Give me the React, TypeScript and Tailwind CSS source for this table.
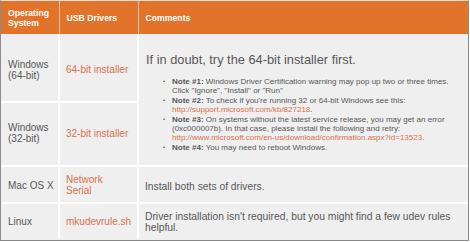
import React from "react";

const link = "text-[#dd6f4a]";

const notes = [
  {
    label: "Note #1:",
    body: <>Windows Driver Certification warning may pop up two or three times. Click "Ignore", "Install" or "Run"</>,
  },
  {
    label: "Note #2:",
    body: (
      <>
        To check if you're running 32 or 64-bit Windows see this:{" "}
        <span className={link}>http://support.microsoft.com/kb/827218</span>.
      </>
    ),
  },
  {
    label: "Note #3:",
    body: (
      <>
        On systems without the latest service release, you may get an error (0xc000007b). In that case, please install the following and retry:{" "}
        <span className={link}>http://www.microsoft.com/en-us/download/confirmation.aspx?id=13523</span>.
      </>
    ),
  },
  { label: "Note #4:", body: <>You may need to reboot Windows.</> },
];

export default function App() {
  return (
    <div className="w-[470px] h-[242px] bg-white" style={{ fontFamily: '"Liberation Sans", Arial, sans-serif' }}>
      <div className="w-[469px] h-[241px] border border-[#8c8c8c] border-t-[#dcdcdc] bg-[#efefef] overflow-hidden">
        <table className="w-full table-fixed border-collapse text-[#585858]">
          <colgroup>
            <col className="w-[58px]" />
            <col className="w-[79px]" />
            <col />
          </colgroup>
          <thead>
            <tr className="h-[33px] bg-[#e2732a] text-white text-[8.7px] leading-[10px] text-left">
              <th className="pl-[7px] pt-[1px] border-r border-[#f2c6a6] font-bold">Operating<br />System</th>
              <th className="pl-[7px] pt-[1px] border-r border-[#f2c6a6] font-bold">USB Drivers</th>
              <th className="pl-[7px] pt-[1px] font-bold">Comments</th>
            </tr>
          </thead>
          <tbody className="text-[10px] leading-[11px]">
            <tr className="h-[68px]">
              <td className="pl-[7px] pt-[4px] border-r-2 border-b-2 border-white align-middle">Windows<br />(64-bit)</td>
              <td className={`pl-[6px] pt-[4px] border-r-2 border-b-2 border-white align-middle ${link}`}>64-bit installer</td>
              <td rowSpan={2} className="pl-[7px] pr-[8px] pt-[18px] border-b-2 border-white align-top">
                <div className="text-[12.8px] leading-[15px]">If in doubt, try the 64-bit installer first.</div>
                <ul className="mt-[10px] ml-[17px] text-[8px] leading-[9.4px]">
                  {notes.map((n) => (
                    <li key={n.label} className="flex">
                      <span className="w-[9px] shrink-0 text-[6px]">•</span>
                      <span>
                        <b className="font-bold">{n.label}</b> {n.body}
                      </span>
                    </li>
                  ))}
                </ul>
              </td>
            </tr>
            <tr className="h-[64px]">
              <td className="pl-[7px] pb-[2px] border-r-2 border-b-2 border-white align-middle">Windows<br />(32-bit)</td>
              <td className={`pl-[6px] pb-[2px] border-r-2 border-b-2 border-white align-middle ${link}`}>32-bit installer</td>
            </tr>
            <tr className="h-[37px]">
              <td className="pl-[7px] pt-[2px] border-r-2 border-b-2 border-white align-middle">Mac OS X</td>
              <td className={`pl-[6px] border-r-2 border-b-2 border-white align-middle ${link}`}>Network<br />Serial</td>
              <td className="pl-[6px] pt-[3px] border-b-2 border-white align-middle text-[10.3px]">Install both sets of drivers.</td>
            </tr>
            <tr className="h-[36px]">
              <td className="pl-[7px] border-r-2 border-white align-middle">Linux</td>
              <td className={`pl-[6px] border-r-2 border-white align-middle ${link}`}>mkudevrule.sh</td>
              <td className="pl-[6px] pr-[4px] align-middle text-[10.3px] leading-[11px]">
                Driver installation isn't required, but you might find a few udev rules helpful.
              </td>
            </tr>
          </tbody>
        </table>
      </div>
    </div>
  );
}
